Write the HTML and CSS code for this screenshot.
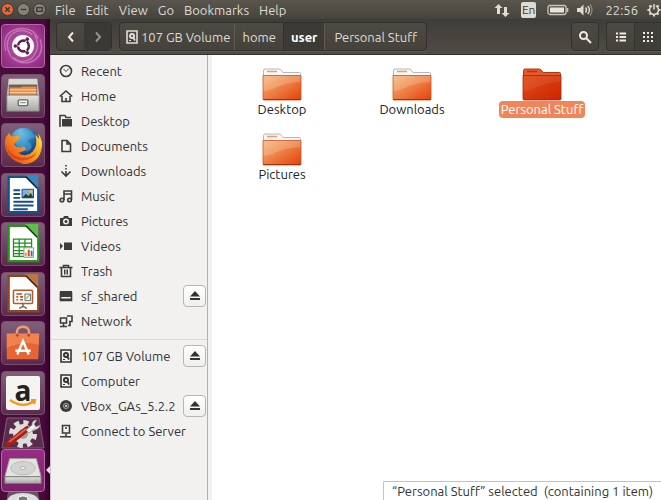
FILE: index.html
```
<!DOCTYPE html>
<html lang="en">
<head>
<meta charset="utf-8">
<title>Personal Stuff</title>
<meta name="viewport" content="width=device-width, initial-scale=1">
<link rel="stylesheet" href="styles.css">
</head>
<body>
<svg class="defs" aria-hidden="true">
  <defs>
    <linearGradient id="folder-front" x1="0" y1="0" x2="1" y2="1"><stop offset="0" stop-color="#f7b577"/><stop offset=".5" stop-color="#ed7d42"/><stop offset="1" stop-color="#e4400b"/></linearGradient>
    <linearGradient id="folder-selected" x1="0" y1="0" x2="1" y2="1"><stop offset="0" stop-color="#e14b1b"/><stop offset="1" stop-color="#cd2500"/></linearGradient>
    <linearGradient id="metal" x1="0" y1="0" x2="0" y2="1"><stop offset="0" stop-color="#e4e4e1"/><stop offset="1" stop-color="#a5a6a4"/></linearGradient>
    <radialGradient id="globe" cx=".4" cy=".2" r=".8"><stop offset="0" stop-color="#8dd3ef"/><stop offset=".5" stop-color="#2374b9"/><stop offset="1" stop-color="#142d68"/></radialGradient>
    <linearGradient id="fox" x1="1" y1="0" x2="0" y2=".8"><stop offset="0" stop-color="#ffe64d"/><stop offset=".45" stop-color="#fba01d"/><stop offset="1" stop-color="#e5441a"/></linearGradient>
    <symbol id="i-folder" viewBox="0 0 40 33">
      <path d="M1.5 8V2.5Q1.5 1 3 1H17q2 0 3 2l1 1.500h16.500q1 0 1 1V10H1.500z" fill="#f7f7f6" stroke="#b7b7b5"/>
      <path d="M5 3.500H15" stroke="#f39a61" stroke-width="1.500"/>
      <path d="M1 7.500H39V31q0 1-1 1H2q-1 0-1-1z" fill="url(#folder-front)" stroke="#c85520" stroke-width=".8"/>
      <path d="M1.500 8H38.500V14Q23 15 15 19T1.500 23z" fill="#fff" opacity=".18"/>
      <path d="M1 31.500H39" stroke="#a9310a"/>
    </symbol>
    <symbol id="i-folder-selected" viewBox="0 0 40 33">
      <path d="M1.500 8V2.500Q1.500 1 3 1H17q2 0 3 2l1 1.500h16.500q1 0 1 1V10H1.500z" fill="#e65a2c" stroke="#a93a18"/>
      <path d="M5 3.500H15" stroke="#c92d08" stroke-width="1.500"/>
      <path d="M1 7.500H39V31q0 1-1 1H2q-1 0-1-1z" fill="url(#folder-selected)" stroke="#a92500" stroke-width=".8"/>
      <path d="M1.500 8H38.500V14Q23 15 15 19T1.500 23z" fill="#fff" opacity=".07"/>
    </symbol>
    <symbol id="i-disk" viewBox="0 0 14 14"><path d="M2 1h10v12H2z" fill="none" stroke="currentColor" stroke-width="1.600"/><circle cx="7" cy="6" r="3" fill="currentColor" stroke="none"/><circle cx="7" cy="6" r="1.100" class="hole"/><path d="M8 7l2 3.500" fill="none" stroke="currentColor" stroke-width="1.800"/><path d="M4 10.500h2" stroke="currentColor" stroke-width="1.200"/></symbol>
    <symbol id="i-eject" viewBox="0 0 12 12"><path d="M6 1l5 5.500H1zM1 8h10v2H1z" fill="currentColor"/></symbol>
  </defs>
</svg>

<header class="panel">
  <div class="window-buttons">
    <button class="round close" aria-label="Close"><svg viewBox="0 0 12 12"><path d="M3.500 3.500l5 5m0-5l-5 5"/></svg></button>
    <button class="round" aria-label="Minimize"><svg viewBox="0 0 12 12"><path d="M3 6h6"/></svg></button>
    <button class="round" aria-label="Maximize"><svg viewBox="0 0 12 12"><path d="M3 4h6v4H3z"/></svg></button>
  </div>
  <nav class="menus" aria-label="Application menu">
    <button>File</button><button>Edit</button><button>View</button><button>Go</button><button>Bookmarks</button><button>Help</button>
  </nav>
  <div class="indicators">
    <svg class="net" viewBox="0 0 16 14" fill="currentColor"><path d="M4.500 1L8.500 5H6v6H3V5H.5zM11.500 14l-4-4H10V4h3v6h2.500z"/></svg>
    <span class="lang">En</span>
    <svg class="battery" viewBox="0 0 22 12"><rect x="1" y="1.500" width="18" height="9" rx="2" fill="none" stroke="#c9c5bc" stroke-width="1.300"/><rect x="3" y="3.500" width="14" height="5" fill="#e7e3da"/><path d="M20.500 4v4" stroke="#c9c5bc" stroke-width="1.600"/></svg>
    <svg class="sound" viewBox="0 0 18 14"><path d="M1 5h3l3.500-3.500v11L4 9H1z" fill="currentColor"/><path d="M9.500 4.500q2 2.500 0 5M11.800 3q3.200 4 0 8" fill="none" stroke="currentColor" stroke-width="1.400"/><path d="M14 1.500q4 5.500 0 11" fill="none" stroke="#8d8a82" stroke-width="1.300"/></svg>
    <time>22:56</time>
    <svg class="gear" viewBox="0 0 14 14" fill="none" stroke="currentColor"><path d="M5.200 2.900a4.500 4.500 0 1 0 3.600 0M7 1v5.500" stroke-width="1.500"/><path d="M7 11.500v2M.5 7h2M11.500 7h2M2.400 2.400l1.400 1.400M10.200 10.200l1.400 1.400M11.600 2.400l-1.400 1.400M3.800 10.200l-1.400 1.400" stroke-width="2"/></svg>
  </div>
</header>

<div class="desktop">
  <nav class="launcher" aria-label="Launcher">
    <button class="tile dash" aria-label="Search your computer"><svg viewBox="0 0 44 44" fill="none"><path d="M4 27Q-1 8 17 4q15-2 21 10M9 32Q2 20 9 11 19 1 32 10M40 15q5 16-8 23-12 5-23-5M34 10q8 13-3 25-9 7-19-1" stroke="#d891ca" stroke-width="1.500" opacity=".65"/><circle cx="22" cy="22" r="11.500" fill="#fff"/><circle cx="22.500" cy="22" r="5.600" stroke="#611e4e" stroke-width="2.800"/><path d="M22.500 22h-9M22.500 22l4.500-8M22.500 22l4.500 8" stroke="#fff" stroke-width="1.200"/><g fill="#611e4e"><circle cx="14" cy="22" r="1.900"/><circle cx="26.500" cy="14.800" r="1.900"/><circle cx="26.500" cy="29.200" r="1.900"/></g><circle cx="22.500" cy="22" r="4" fill="#fff"/></svg></button>
    <button class="tile" aria-label="Files"><svg viewBox="0 0 44 44"><path d="M7 4h30l2 19H5z" fill="#d9d9d6"/><path d="M7 10h30v13H7z" fill="#66605b"/><path d="M8 13h12l1-1h15v10H8z" fill="#f08b45"/><path d="M8 15.500h28M8 18.500h28" stroke="#ffe0b0"/><path d="M5 21h34v17H5z" fill="url(#metal)" stroke="#777"/><rect x="17" y="26" width="10" height="6" rx="1" fill="#f5f5f3" stroke="#666" stroke-width="1.400"/><path d="M19 29h6" stroke="#777"/></svg></button>
    <button class="tile" aria-label="Firefox"><svg viewBox="0 0 44 44"><circle cx="23" cy="20" r="16" fill="url(#globe)"/><path d="M27 6q6 2 8 9-7-1-9 3 5 1 5 7-4 6-9 2-7-2-8-7 1-7-3-10" fill="#58acd5" opacity=".5"/><path d="M4 14l4-5q0 4 3 4 5-2 8 1l-3 4q-3 1-3 4 4 4 8 2 3-1 4 2-3 4-8 4 8 6 15-1 6-6 3-18l4 5-1-6q6 8 3 18-4 14-19 14Q8 38 4 27 2 20 4 14z" fill="url(#fox)"/><path d="M4 20q3 13 15 15 10 2 18-6-5 9-15 9Q7 38 4 20z" fill="#cf3616" opacity=".65"/></svg></button>
    <button class="tile" aria-label="LibreOffice Writer"><svg viewBox="0 0 44 44"><path d="M7 3h19l12 12v25H7z" fill="#fff" stroke="#12538f" stroke-width="2.400"/><path d="M24 1h14v15z" fill="#3b87bf"/><path d="M25 3l12 12" stroke="#111c2a" stroke-width="1.500"/><g stroke="#174d87" stroke-width="2"><path d="M12 17h7M12 21h7M12 25h7M12 29h21M12 33h21M12 37h15"/></g><path d="M21 16h12v9H21z" fill="#7eb2d7" stroke="#174d87"/><path d="M21 25l4-4 3 2 2-3 3 5z" fill="#263b2b"/><circle cx="30" cy="18.500" r="1.500" fill="#ffbd43"/></svg></button>
    <button class="tile" aria-label="LibreOffice Calc"><svg viewBox="0 0 44 44"><path d="M7 3h19l12 12v25H7z" fill="#fff" stroke="#23961b" stroke-width="2.400"/><path d="M24 1h14v15z" fill="#5bc149"/><path d="M25 3l12 12" stroke="#173a15" stroke-width="1.500"/><path d="M12 17h19v18H12zM12 21h19M12 25h19M12 29h19M12 32h19M18 17v18M24 17v18" fill="none" stroke="#238c21" stroke-width="1.300"/><rect x="23" y="26" width="10" height="10" fill="#fff" stroke="#999"/><path d="M25 35v-4" stroke="#e5a52a" stroke-width="2"/><path d="M28 35v-7" stroke="#d2422d" stroke-width="2"/><path d="M31 35v-6" stroke="#3275b7" stroke-width="2"/></svg></button>
    <button class="tile" aria-label="LibreOffice Impress"><svg viewBox="0 0 44 44"><path d="M7 3h19l12 12v25H7z" fill="#fff" stroke="#91471d" stroke-width="2.400"/><path d="M24 1h14v15z" fill="#b97743"/><path d="M25 3l12 12" stroke="#42200c" stroke-width="1.500"/><rect x="12" y="18" width="20" height="14" rx="1" fill="#fff" stroke="#b65a27" stroke-width="1.600"/><path d="M15 22h6M15 25h2M15 28h2M19 25h3M19 28h3" stroke="#be4c20" stroke-width="1.600"/><path d="M24 22h6v7h-6z" fill="#edf5e7" stroke="#666"/><path d="M25 27l2-2 2-2" stroke="#31923a" fill="none"/><path d="M22 32v3l-4 2m4-2l4 2" fill="none" stroke="#65635f" stroke-width="1.500"/></svg></button>
    <button class="tile" aria-label="Ubuntu Software"><svg viewBox="0 0 44 44"><path d="M16 15q-2-10 6-10t6 10" fill="none" stroke="#f29b72" stroke-width="2.500"/><path d="M5 12h34l-1 27H5z" fill="#e86435"/><path d="M5 12h34l-.5 12Q23 19 5 27z" fill="#f79561" opacity=".6"/><circle cx="16" cy="14" r="1.500" fill="#bc4421"/><circle cx="28" cy="14" r="1.500" fill="#bc4421"/><path d="M16 34l6-14 6 14M14 30h16" fill="none" stroke="#fff" stroke-width="2.600"/></svg></button>
    <button class="tile" aria-label="Amazon"><span class="amazon"><span>a</span><svg viewBox="0 0 34 33"><path d="M4 24q13 9 24 1M25 24l4 0-1 4" fill="none" stroke="#f49a17" stroke-width="2.200"/></svg></span></button>
    <button class="tile settings" aria-label="System Settings"><svg viewBox="0 0 44 32"><path d="M6 1h32l5 30H1z" fill="#5b2b4e" stroke="#806079"/><circle cx="22" cy="17" r="10" fill="#dededb"/><circle cx="22" cy="17" r="11.500" fill="none" stroke="#dededb" stroke-width="5" stroke-dasharray="5 4.030"/><circle cx="22" cy="17" r="5" fill="#a99aa2"/><path d="M7 27L26 12" stroke="#a51d13" stroke-width="5.500" stroke-linecap="round"/><path d="M8 25L25 12" stroke="#e65b46" stroke-width="2"/><path d="M25 13l6-5q0-5 5-5l-3 4 2 3 4-2q-1 5-6 4l-5 4z" fill="#f0f0ef" stroke="#888" stroke-width=".7"/></svg></button>
    <button class="tile drive" aria-label="107 GB Volume"><svg viewBox="0 0 44 44"><path d="M8 10h28l5 17v8H3v-8z" fill="#aaa"/><path d="M8 9h28l5 19H3z" fill="#e3e3e0" stroke="#999"/><ellipse cx="22" cy="19" rx="13" ry="7" fill="#d3d3d0" stroke="#bbb"/><ellipse cx="22" cy="19" rx="3" ry="1.500" fill="#f7f7f7" stroke="#aaa"/><path d="M3 28h38v7H3z" fill="url(#metal)" stroke="#777"/><circle cx="36" cy="32" r="1" fill="#99bd82"/></svg><i class="running"></i></button>
    <button class="tile disc" aria-label="VBox_GAs_5.2.2"><svg viewBox="0 0 44 20"><path d="M7 0h30l4 20H3z" fill="#6d5265"/><ellipse cx="22" cy="9" rx="16" ry="8" fill="#ddd"/><ellipse cx="22" cy="7" rx="5" ry="3" fill="#777" stroke="#fff"/></svg></button>
  </nav>

  <div class="window">
    <div class="toolbar">
      <div class="group">
        <button class="square" aria-label="Back"><svg viewBox="0 0 14 14"><path d="M9 2.500L5 7l4 4.500"/></svg></button>
        <button class="square off" aria-label="Forward"><svg viewBox="0 0 14 14"><path d="M5 2.500L9 7l-4 4.500"/></svg></button>
      </div>
      <nav class="group path" aria-label="Path">
        <button><svg class="disk"><use href="#i-disk"/></svg>107 GB Volume</button>
        <button>home</button>
        <button class="current">user</button>
        <button class="child">Personal Stuff</button>
      </nav>
      <button class="square search" aria-label="Search"><svg viewBox="0 0 14 14"><circle cx="5.500" cy="5.500" r="3.500"/><path d="M8.500 8.500L13 13"/></svg></button>
      <div class="group views">
        <button class="square" aria-label="List view"><svg viewBox="0 0 14 14"><path d="M2 3.500h2m1.500 0H12M2 7h2m1.500 0H12M2 10.500h2m1.500 0H12"/></svg></button>
        <button class="square pressed" aria-label="Icon view"><svg viewBox="0 0 14 14"><path d="M2 3h2m2 0h2m2 0h2M2 7h2m2 0h2m2 0h2M2 11h2m2 0h2m2 0h2"/></svg></button>
      </div>
    </div>

    <div class="content">
      <aside class="sidebar">
        <ul class="places">
          <li><a href="#"><svg viewBox="0 0 14 14"><circle cx="7" cy="7" r="5.500"/><path class="thin" d="M4.500 5L7 7.500l3-3"/></svg>Recent</a></li>
          <li><a href="#"><svg viewBox="0 0 14 14"><path d="M.7 7.500L7 2l6.300 5.500M3 7v5.500h8V7M7 13V9"/></svg>Home</a></li>
          <li><a href="#"><svg viewBox="0 0 14 14"><path d="M1 13V1.500h5l1 2h5" /><path class="solid" d="M3 5h10v7.500H3z"/></svg>Desktop</a></li>
          <li><a href="#"><svg viewBox="0 0 14 14"><path d="M3 1.500h5l3.500 3.500v7.500H3zM8 1.500V5h3"/></svg>Documents</a></li>
          <li><a href="#"><svg viewBox="0 0 14 14"><path d="M7 1v1.500M7 4v1.500M7 7v5M2.500 7.500L7 12l4.500-4.500"/></svg>Downloads</a></li>
          <li><a href="#"><svg viewBox="0 0 14 14"><circle cx="3" cy="11" r="1.800"/><circle cx="10.500" cy="11" r="1.800"/><path d="M5 11V2h7.500v9M5 5h7"/></svg>Music</a></li>
          <li><a href="#"><svg viewBox="0 0 14 14"><path class="solid" fill-rule="evenodd" d="M1 4h3l1-2h4l1 2h3v8H1zM7 4.500a3 3 0 1 0 0 6 3 3 0 0 0 0-6z"/><circle cx="7" cy="7.500" r="1.500" class="solid"/></svg>Pictures</a></li>
          <li><a href="#"><svg viewBox="0 0 14 14"><path class="solid" d="M5 3.500h8v7.500H5zM1 4l3 3-3 3.500z"/></svg>Videos</a></li>
          <li><a href="#"><svg viewBox="0 0 14 14"><path d="M.5 3.500h13M4.500 3V1.500h5V3M2.500 4v8.500h9V4"/><path class="thin" d="M5.500 5.500v5M7 5.500v5M8.500 5.500v5"/></svg>Trash</a></li>
          <li><a href="#"><svg viewBox="0 0 14 14"><path class="solid" d="M1 2h12v6H1zM1 9.500h12V12H1z"/><path d="M1.500 3v8.500h11V3"/></svg>sf_shared</a><button class="eject" aria-label="Eject sf_shared"><svg><use href="#i-eject"/></svg></button></li>
          <li><a href="#"><svg viewBox="0 0 14 14"><path d="M1.500 4h6v5h-6zM4.500 9v3M1 12.500h7M8 2h5v5.500h-3M11 8v3.500H9"/></svg>Network</a></li>
        </ul>
        <ul class="places devices">
          <li><a href="#"><svg><use href="#i-disk"/></svg>107 GB Volume</a><button class="eject" aria-label="Eject 107 GB Volume"><svg><use href="#i-eject"/></svg></button></li>
          <li><a href="#"><svg><use href="#i-disk"/></svg>Computer</a></li>
          <li><a href="#"><svg viewBox="0 0 14 14"><circle class="solid" cx="7" cy="7" r="6"/><circle cx="7" cy="7" r="2.500" class="ring"/><circle cx="7" cy="7" r="1" class="hole"/></svg>VBox_GAs_5.2.2</a><button class="eject" aria-label="Eject VBox_GAs_5.2.2"><svg><use href="#i-eject"/></svg></button></li>
          <li><a href="#"><svg viewBox="0 0 14 14"><path d="M3.500 1.500h7V9h-7zM7 9v4M1 12.700h11M6 4h2"/></svg>Connect to Server</a></li>
        </ul>
      </aside>
      <main class="files">
        <button class="file"><svg><use href="#i-folder"/></svg><span>Desktop</span></button>
        <button class="file"><svg><use href="#i-folder"/></svg><span>Downloads</span></button>
        <button class="file selected"><svg><use href="#i-folder-selected"/></svg><span>Personal Stuff</span></button>
        <button class="file"><svg><use href="#i-folder"/></svg><span>Pictures</span></button>
        <output class="status">“Personal Stuff” selected&nbsp; (containing 1 item)</output>
      </main>
    </div>
  </div>
</div>
</body>
</html>
```
FILE: styles.css
```
* { box-sizing: border-box; }

body {
  margin: 0;
  height: 100vh;
  display: flex;
  flex-direction: column;
  overflow: hidden;
  color: #333;
  font: 13px/18px "Ubuntu", "Noto Sans", sans-serif;
}

button {
  margin: 0;
  padding: 0;
  border: 0;
  background: none;
  color: inherit;
  font: inherit;
}

svg { display: block; flex: none; }
.defs { position: absolute; width: 0; height: 0; }
.hole { fill: var(--hole); stroke: none; }

/* Top panel */
.panel {
  display: flex;
  align-items: center;
  flex: none;
  height: 19px;
  background: linear-gradient(#5a564d, #45433d);
  color: #dfdbd2;
}

.window-buttons { display: flex; gap: 3px; padding-left: 1px; }

.round {
  width: 13px;
  height: 13px;
  border: 1px solid #3a3833;
  border-radius: 50%;
  background: #85827a;
}

.round.close { background: #ef6537; }
.round svg { width: 11px; height: 11px; fill: none; stroke: #3b3832; stroke-width: 1.5; }

.menus { display: flex; gap: 10px; padding-left: 9px; }

.indicators { display: flex; align-items: center; gap: 11px; margin-left: auto; }
.net { width: 16px; height: 14px; }
.lang { padding: 0 1px; border-radius: 2px; background: #dfdbd2; color: #3c3b37; font-size: 12px; line-height: 16px; }
.battery { width: 22px; height: 12px; }
.sound { width: 18px; height: 14px; margin-left: -4px; }
.gear { width: 14px; height: 14px; margin-left: -2px; }

.desktop { display: flex; flex: 1; min-height: 0; }

/* Launcher */
.launcher {
  flex: none;
  width: 50px;
  padding: 5px 0 0 1px;
  overflow: hidden;
  background: linear-gradient(90deg, #4a0e3c, #46093a 44px, #310327);
}

.tile {
  position: relative;
  display: block;
  width: 44px;
  height: 44px;
  margin-bottom: 6px;
  border: 1px solid #76506a;
  border-radius: 4px;
  background: linear-gradient(#806079, #5b2b4e);
}

.tile:nth-child(even) { margin-bottom: 5px; }
.tile > svg { width: 42px; height: 42px; }
.dash { border-color: #b367a6; background: radial-gradient(#b75fa9, #8d247c); }

.amazon {
  display: grid;
  width: 34px;
  height: 34px;
  margin: 0 auto;
  border-radius: 2px;
  background: #f4f4f3;
  color: #222;
  font: 700 28px/28px "Open Sans", sans-serif;
  text-align: center;
}

.amazon > * { grid-area: 1 / 1; }
.amazon svg { width: 34px; height: 33px; }

.tile.settings { height: 32px; margin: -3px 0 0; border: 0; background: none; }
.tile.settings svg { width: 44px; height: 32px; }
.tile.drive { height: 43px; margin-bottom: 0; border-color: #b367a6; background: linear-gradient(#982b86, #792068); }
.tile.disc { height: 20px; border: 0; background: none; }
.tile.disc svg { width: 44px; height: 20px; }

.running {
  position: absolute;
  top: 16px;
  right: -6px;
  border: solid transparent;
  border-width: 4px 4px 4px 0;
  border-right-color: #e9e2e6;
}

/* File manager */
.window { display: flex; flex: 1; flex-direction: column; min-width: 0; }

.toolbar {
  --hole: #45423c;
  display: flex;
  align-items: center;
  flex: none;
  height: 36px;
  padding: 0 0 0 6px;
  border-bottom: 1px solid #34322e;
  background: linear-gradient(#3f3d39, #504c45);
  color: #dfdbd2;
}

.group, .search {
  display: flex;
  height: 29px;
  border: 1px solid #33312d;
  border-radius: 4px;
  background: linear-gradient(#4d4a44, #45423c);
  box-shadow: 0 1px #5d594f;
}

.square {
  display: flex;
  align-items: center;
  justify-content: center;
  width: 27px;
}

.square svg { width: 14px; height: 14px; fill: none; stroke: #eeebe4; stroke-width: 2; }
.square.off { background: #3b3935; }
.square.off svg { stroke: #96938b; }

.path { margin-left: 7px; }

.path button {
  display: flex;
  align-items: center;
  gap: 2px;
  padding: 0 7px;
  border-left: 1px solid #605c53;
  white-space: nowrap;
}

.path button:first-child { padding: 0 4px 0 5px; border-left: 0; }
.path .current { border-color: #33312d; background: #3c3a35; color: #fff; font-weight: 700; }
.path .child { padding: 0 9px; }
.disk { width: 14px; height: 14px; }

.search { width: 28px; margin-left: auto; }
.views { margin-left: 7px; border-right: 0; border-radius: 4px 0 0 4px; }
.views .pressed { border-left: 1px solid #35332f; background: #403e39; }

.content { display: flex; flex: 1; min-height: 0; background: #f2f1f0; }

.sidebar {
  --hole: #f2f1f0;
  flex: none;
  width: 158px;
  padding-top: 3px;
  border-right: 1px solid #b3b1ae;
  border-left: 1px solid #d1bccb;
  background: #f2f1f0;
}

.places { margin: 0; padding: 0; list-style: none; }
.places li { display: flex; align-items: center; height: 25px; padding-right: 1px; }

.places a {
  display: flex;
  align-items: center;
  flex: 1;
  gap: 8px;
  padding-left: 8px;
  color: inherit;
  text-decoration: none;
  white-space: nowrap;
}

.places a svg { width: 14px; height: 14px; fill: none; stroke: #3c3c3c; stroke-width: 1.6; }
.places .solid { fill: #3c3c3c; stroke: none; }
.places .thin { stroke-width: 1; }
.places .ring { stroke: #aaa; stroke-width: 1; }

.devices { margin-top: 6px; padding-top: 3px; border-top: 1px solid #dcd9d5; }

.eject {
  display: flex;
  align-items: center;
  justify-content: center;
  flex: none;
  width: 23px;
  height: 22px;
  border: 1px solid #b9b6b2;
  border-radius: 4px;
  background: linear-gradient(#fff, #f0efed);
}

.eject svg { width: 12px; height: 12px; }

.files {
  position: relative;
  display: grid;
  grid-template-columns: repeat(auto-fill, 130px);
  grid-auto-rows: 65px;
  align-content: start;
  flex: 1;
  min-width: 0;
  margin-left: 4px;
  padding: 13px 0 0 5px;
  background: #fff;
}

.file {
  display: flex;
  flex-direction: column;
  align-items: center;
  align-self: start;
  color: #222;
}

.file svg { width: 40px; height: 33px; }
.file span { padding: 0 2px; border-radius: 4px; line-height: 17px; }
.selected span { background: #f0855a; color: #fff; }

.status {
  position: absolute;
  right: 0;
  bottom: 0;
  padding: 0 8px;
  border: solid #c4c2bf;
  border-width: 1px 0 0 1px;
  border-radius: 2px 0 0;
  background: #fff;
  white-space: nowrap;
}
```
